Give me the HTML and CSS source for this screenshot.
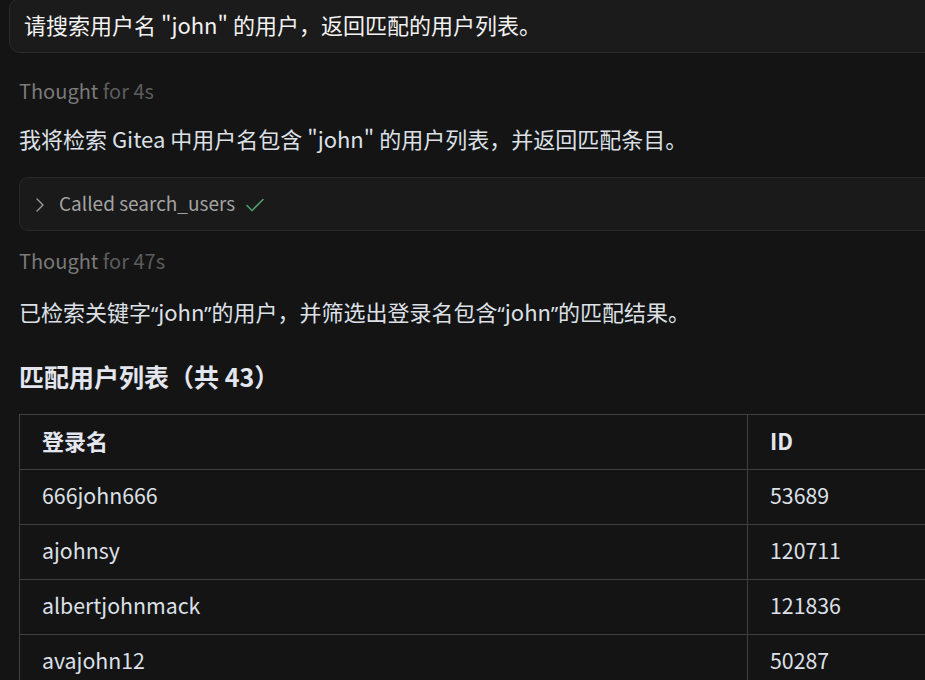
FILE: index.html
```html
<!DOCTYPE html>
<html lang="zh-CN">
<head>
<meta charset="utf-8">
<title>search users</title>
<link rel="stylesheet" href="styles.css">
</head>
<body>
<div class="chat">
  <div class="user-msg">请搜索用户名 "john" 的用户，返回匹配的用户列表。</div>

  <div class="thought">Thought <span class="dur">for 4s</span></div>
  <p class="para p1">我将检索 Gitea 中用户名包含 "john" 的用户列表，并返回匹配条目。</p>

  <div class="tool">
    <svg class="chev" width="10" height="16" viewBox="0 0 10 16"><path d="M2 2 L8 8 L2 14" fill="none" stroke="#9a9a9a" stroke-width="1.4" stroke-linecap="round" stroke-linejoin="round"/></svg>
    <span class="tool-label">Called search_users</span>
    <svg class="check" width="20" height="16" viewBox="0 0 20 16"><path d="M2 8.5 L7 13.5 L18 2.5" fill="none" stroke="#4f9d69" stroke-width="1.6" stroke-linecap="round" stroke-linejoin="round"/></svg>
  </div>

  <div class="thought t2">Thought <span class="dur">for 47s</span></div>
  <p class="para p2">已检索关键字<span class="q">“</span>john<span class="q">”</span>的用户，并筛选出登录名包含<span class="q">“</span>john<span class="q">”</span>的匹配结果。</p>

  <h3 class="heading">匹配用户列表（共 43）</h3>

  <table class="users">
    <thead>
      <tr><th class="c1">登录名</th><th class="c2">ID</th></tr>
    </thead>
    <tbody>
      <tr><td>666john666</td><td>53689</td></tr>
      <tr><td>ajohnsy</td><td>120711</td></tr>
      <tr><td>albertjohnmack</td><td>121836</td></tr>
      <tr><td>avajohn12</td><td>50287</td></tr>
    </tbody>
  </table>
</div>
</body>
</html>
```

FILE: styles.css
```css
html, body {
  margin: 0;
  padding: 0;
  background: #141414;
  overflow: hidden;
  height: 680px;
}
body {
  font-family: "Noto Sans CJK SC", "Noto Sans", sans-serif;
  font-size: 22px;
  line-height: 28px;
  color: #dde0e7;
}
.chat {
  width: 1150px;
  padding-left: 19px;
}
.user-msg {
  margin-left: -10px;
  margin-top: -2px;
  background: #1b1b1b;
  border: 1px solid #2b2b2b;
  border-radius: 11px;
  padding: 11px 14px 14px 14px;
  color: #f2f2f2;
}
.thought {
  margin-top: 24px;
  font-size: 20px;
  color: #7a7a7a;
}
.thought .dur {
  color: #5c5c5c;
}
.t2 {
  margin-top: 16px;
}
.para {
  margin: 19px 0 0 0;
}
.p2 {
  margin-top: 22px;
}
.q {
  font-family: "Noto Sans", sans-serif;
  font-size: 20px;
}
.tool {
  margin-top: 25px;
  background: #1a1a1a;
  border: 1px solid #292929;
  border-radius: 9px;
  padding: 11px 14px 13px 14px;
  display: flex;
  align-items: center;
  color: #a3a3a3;
}
.chev {
  margin-left: 1px;
  margin-top: 3px;
}
.tool-label {
  font-size: 19px;
  margin-left: 14px;
}
.check {
  margin-left: 10px;
  margin-top: 3px;
}
.heading {
  margin: 32px 0 0 0;
  font-size: 25px;
  line-height: 32px;
  font-weight: 700;
  color: #e3e6ee;
}
.users {
  margin-top: 22px;
  border-collapse: collapse;
  width: 1100px;
}
.users th, .users td {
  border: 1px solid #3f3f3f;
  padding: 11px 22px 15px 22px;
  text-align: left;
  line-height: 28px;
}
.users td {
  font-size: 21.3px;
}
.users th {
  font-weight: 700;
  color: #e3e6ee;
}
.users .c1 {
  width: 683px;
}
```
